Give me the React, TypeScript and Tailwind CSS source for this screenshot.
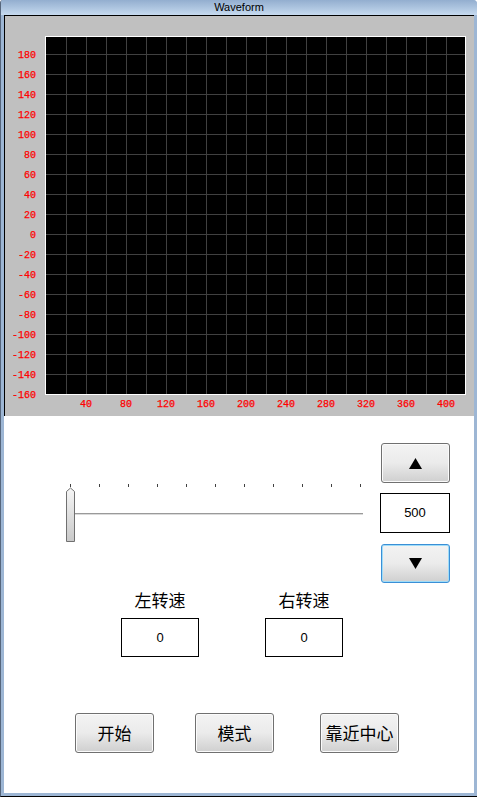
import React from "react";

const yLabels = Array.from({ length: 18 }, (_, i) => 180 - i * 20);
const xLabels = Array.from({ length: 10 }, (_, i) => (i + 1) * 40);
const vLines = Array.from({ length: 20 }, (_, i) => 66 + i * 20);
const hLines = Array.from({ length: 17 }, (_, i) => 54 + i * 20);
const ticks = Array.from({ length: 11 }, (_, i) => 8 + i * 29);

function Chart() {
  return (
    <svg width={469} height={400} viewBox="5 16 469 400" className="block">
      <rect x={45.5} y={36.5} width={420} height={358} fill="#000" stroke="#fff" strokeWidth={1} />
      {vLines.map((x) => (
        <line key={"v" + x} x1={x + 0.5} y1={37} x2={x + 0.5} y2={394} stroke="#404040" strokeWidth={1} />
      ))}
      {hLines.map((y) => (
        <line key={"h" + y} x1={46} y1={y + 0.5} x2={465} y2={y + 0.5} stroke="#404040" strokeWidth={1} />
      ))}
      {yLabels.map((v, i) => (
        <text
          key={"yl" + v}
          x={36}
          y={54 + i * 20 + 3.5}
          textAnchor="end"
          fill="#ff0000"
          fontSize={10}
          fontFamily="'Liberation Mono', monospace"
          stroke="#ff0000"
          strokeWidth={0.25}
        >
          {v}
        </text>
      ))}
      {xLabels.map((v, i) => (
        <text
          key={"xl" + v}
          x={86 + i * 40}
          y={406.5}
          textAnchor="middle"
          fill="#ff0000"
          fontSize={10}
          fontFamily="'Liberation Mono', monospace"
          stroke="#ff0000"
          strokeWidth={0.25}
        >
          {v}
        </text>
      ))}
    </svg>
  );
}

function Slider() {
  return (
    <svg width={304} height={140} className="block">
      <defs>
        <linearGradient id="thumbg" x1="0" y1="0" x2="0" y2="1">
          <stop offset="0" stopColor="#f6f6f6" />
          <stop offset="1" stopColor="#c9c9c9" />
        </linearGradient>
      </defs>
      {ticks.map((x) => (
        <line key={x} x1={x + 0.5} y1={41} x2={x + 0.5} y2={44} stroke="#404040" strokeWidth={1} />
      ))}
      <line x1={12} y1={70.5} x2={301} y2={70.5} stroke="#9a9a9a" strokeWidth={1} />
      <line x1={12} y1={71.5} x2={301} y2={71.5} stroke="#dadada" strokeWidth={1} />
      <polygon
        points="4.5,48.5 8.5,45 12.5,48.5 12.5,98.5 4.5,98.5"
        fill="url(#thumbg)"
        stroke="#707070"
        strokeWidth={1}
      />
    </svg>
  );
}

function Tri({ up }: { up: boolean }) {
  return (
    <svg width={13} height={11} viewBox="0 0 13 11" className="block">
      {up ? <polygon points="6.5,0 13,11 0,11" fill="#000" /> : <polygon points="0,0 13,0 6.5,11" fill="#000" />}
    </svg>
  );
}

const btn =
  "flex items-center justify-center rounded-[3px] border border-[#707070] bg-gradient-to-b from-[#f3f3f3] via-[#ebebeb] to-[#cfcfcf] shadow-[inset_0_0_0_1px_#fbfbfb]";

export default function App() {
  return (
    <div className="w-[480px] h-[798px] bg-white" style={{ fontFamily: "'Liberation Sans', 'Noto Sans CJK SC', sans-serif" }}>
      <div className="w-[477px] h-[797px] flex flex-col bg-[#9db6d4] border-l border-b border-l-[#56667c] border-b-black rounded-tr-[4px] rounded-tl-[3px] overflow-hidden">
        <div className="h-[15px] shrink-0 bg-gradient-to-b from-[#93aecf] to-[#c6daef] flex items-center justify-center text-[11px] leading-none text-black">
          Waveform
        </div>
        <div className="flex-1 flex flex-col ml-[3px] mr-[3px] mb-[3px] min-h-0">
          <div className="h-[401px] shrink-0 bg-[#c0c0c0] border-t border-l border-black">
            <Chart />
          </div>
          <div className="flex-1 bg-white flex flex-col">
            <div className="flex mt-[27px]">
              <div className="ml-[58px]">
                <Slider />
              </div>
              <div className="ml-[14px] flex flex-col w-[70px]">
                <div className={btn + " h-[40px] ml-[1px]"}>
                  <Tri up={true} />
                </div>
                <div className="mt-[10px] h-[40px] border border-black bg-white flex items-center justify-center text-[13px] text-black">
                  500
                </div>
                <div className="mt-[11px] ml-[1px] h-[39px] flex items-center justify-center rounded-[3px] border border-[#3a8fd6] bg-gradient-to-b from-[#f3f3f3] via-[#ebebeb] to-[#cfcfcf] shadow-[inset_0_0_0_1px_#9fdcf8]">
                  <Tri up={false} />
                </div>
              </div>
            </div>
            <div className="flex mt-[5px] ml-[117px]">
              <div className="w-[78px] flex flex-col items-center">
                <div className="text-[17px] leading-[24px] text-black" style={{ fontFamily: "'Noto Sans CJK SC', sans-serif" }}>左转速</div>
                <div className="mt-[6px] w-[78px] h-[39px] border border-black flex items-center justify-center text-[13px] text-black">0</div>
              </div>
              <div className="w-[78px] ml-[66px] flex flex-col items-center">
                <div className="text-[17px] leading-[24px] text-black" style={{ fontFamily: "'Noto Sans CJK SC', sans-serif" }}>右转速</div>
                <div className="mt-[6px] w-[78px] h-[39px] border border-black flex items-center justify-center text-[13px] text-black">0</div>
              </div>
            </div>
            <div className="flex mt-[56px] ml-[71px]" style={{ fontFamily: "'Noto Sans CJK SC', sans-serif" }}>
              <div className={btn + " w-[79px] h-[40px] text-[17px] text-black"}>开始</div>
              <div className={btn + " w-[79px] h-[40px] ml-[41px] text-[17px] text-black"}>模式</div>
              <div className={btn + " w-[79px] h-[40px] ml-[46px] text-[17px] text-black whitespace-nowrap"}>靠近中心</div>
            </div>
          </div>
        </div>
      </div>
    </div>
  );
}
